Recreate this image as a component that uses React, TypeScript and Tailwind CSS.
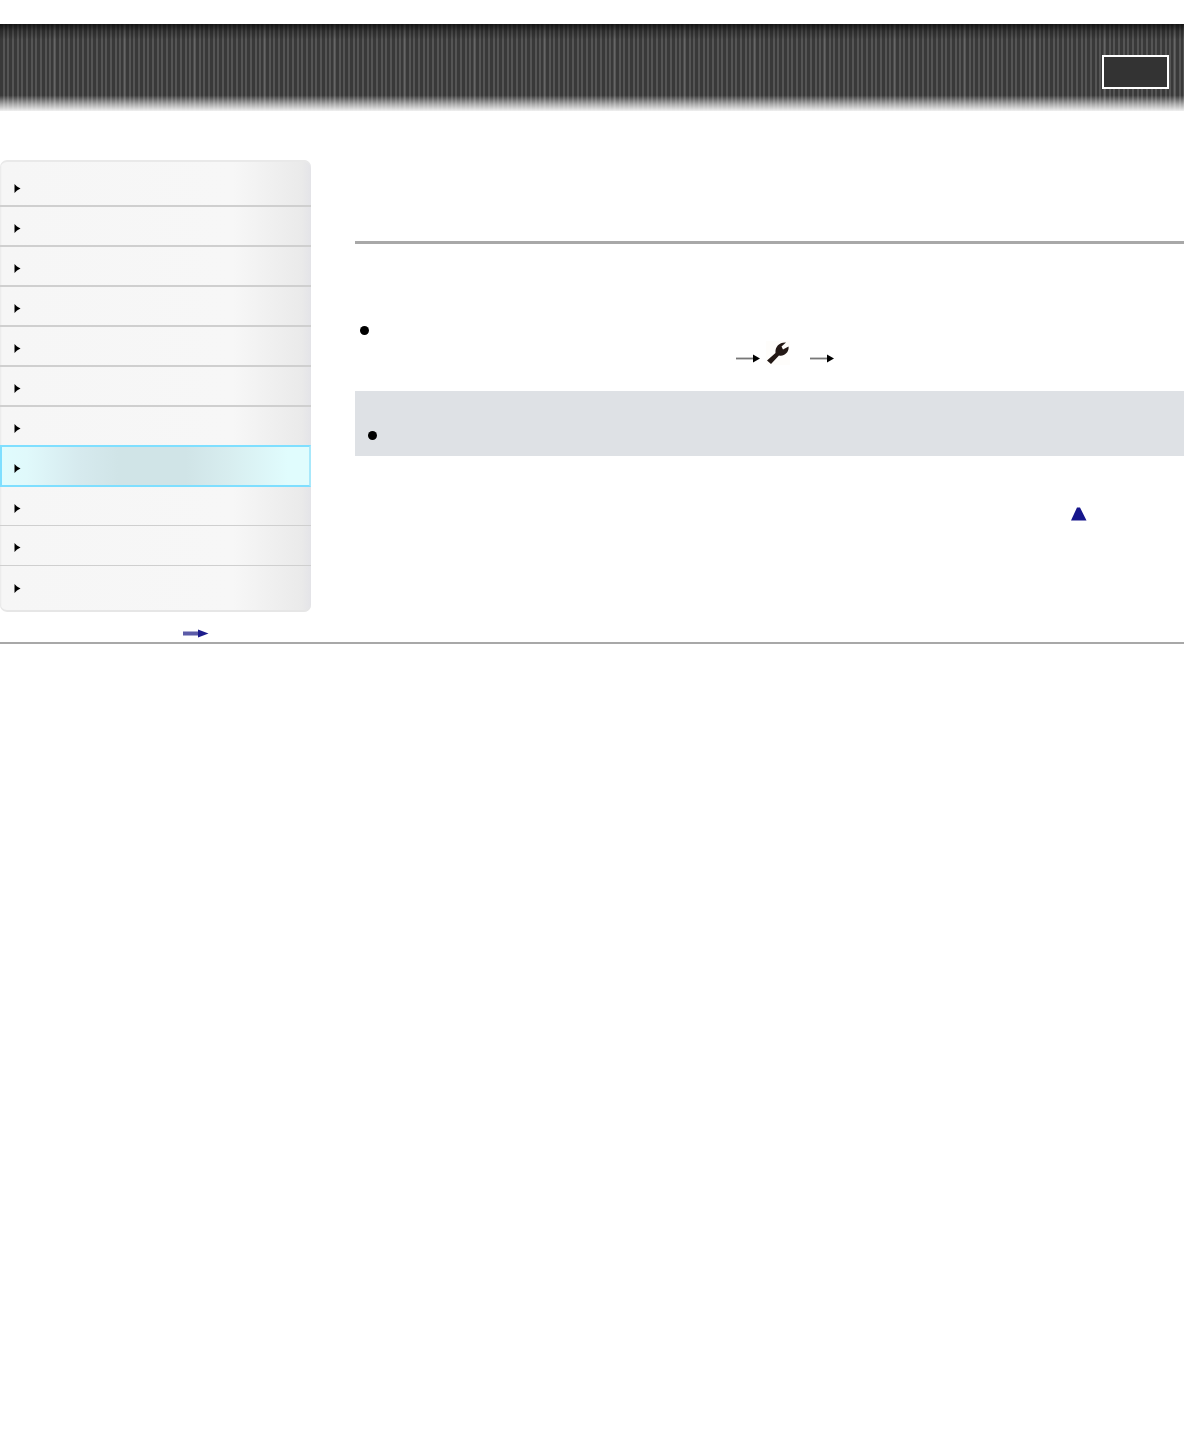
const rows = [0, 1, 2, 3, 4, 5, 6, 7, 8, 9, 10];

function Tri() {
  return (
    <svg width="7" height="9" viewBox="0 0 7 9" className="shrink-0 block blur-[0.4px]">
      <path d="M0.5 0 L0.5 9 L3 6.5 L6.5 4.5 L3 2.5 Z" fill="#000" />
    </svg>
  );
}

const rowClass: Record<number, string> = {
  0: "h-[47px] pt-[24px] border-b-2 border-[#cfcfcf]",
  1: "h-[40px] pt-[17px] border-b-2 border-[#cfcfcf]",
  2: "h-[40px] pt-[17px] border-b-2 border-[#cfcfcf]",
  3: "h-[40px] pt-[17px] border-b-2 border-[#cfcfcf]",
  4: "h-[40px] pt-[17px] border-b-2 border-[#cfcfcf]",
  5: "h-[40px] pt-[17px] border-b-2 border-[#cfcfcf]",
  6: "h-[38px] pt-[17px]",
  8: "h-[39px] pt-[17px] border-b border-[#cfcfcf]",
  9: "h-[40px] pt-[17px] border-b border-[#cfcfcf]",
  10: "h-[46px] pt-[18px]",
};

function Row({ i }: { i: number }) {
  if (i === 7) {
    return (
      <div className="h-[42px] box-border pt-[17px] pl-[12px] border-2 border-[#7fdfff] border-r-[#a8e8fb] bg-[linear-gradient(90deg,#e0fcfd_0%,#e0f9fb_8%,#d6eaee_25%,#d0e4e7_38%,#d0e4e7_60%,#d8eef0_75%,#e0fcfd_93%,#e0fcfd_100%)]">
        <Tri />
      </div>
    );
  }
  return (
    <div
      className={
        "box-border pl-[14px] bg-[linear-gradient(90deg,#e9e9e9_0px,#f6f6f6_2px,#f7f7f7_75%,#eaeaea_97%,#e4e4e8_100%)] " +
        rowClass[i]
      }
    >
      <Tri />
    </div>
  );
}

export default function App() {
  return (
    <div className="w-[1184px] h-[1440px] bg-white overflow-hidden font-['Liberation_Sans',sans-serif]">
      <div className="h-6" />
      <header className="relative h-[87px] bg-[linear-gradient(180deg,rgba(10,10,10,0.8)_0%,rgba(10,10,10,0.3)_8%,rgba(0,0,0,0)_18%,rgba(0,0,0,0)_82%,rgba(240,240,240,0.6)_92%,rgba(240,240,240,1)_100%),repeating-linear-gradient(90deg,transparent_0px,transparent_53px,rgba(255,255,255,0.1)_53px,rgba(255,255,255,0.1)_55px,transparent_55px,transparent_70px),repeating-linear-gradient(90deg,#393939_0px,#393939_3px,#555555_3px,#555555_5px,#393939_5px,#393939_7px,#555555_7px,#555555_9px,#393939_9px,#393939_12px,#555555_12px,#555555_14px)]">
        <div className="absolute left-[1102px] top-[31px] w-[67px] h-[34px] border-2 border-white bg-[#333]" />
      </header>
      <div className="flex h-[531px]">
        <div className="w-[355px] shrink-0 pt-[49px]">
          <aside className="relative w-[311px] rounded-[7px] overflow-hidden after:absolute after:inset-0 after:rounded-[7px] after:shadow-[inset_0_2px_0_#e9e9e9,inset_0_-2px_0_#e6e6e6] after:content-['']">
            {rows.map((i) => (
              <Row key={i} i={i} />
            ))}
          </aside>
          <div className="flex justify-start pl-[183px] pt-[17px]">
            <svg width="26" height="9" viewBox="0 0 26 9" className="block blur-[0.4px]">
              <rect x="0" y="2.5" width="18" height="4" fill="#5b5ba8" />
              <path d="M15 0.5 L25.5 4.5 L15 8.5 Z" fill="#1c1c8c" />
            </svg>
          </div>
        </div>
        <main className="flex-1 pt-[130px]">
          <div className="h-[3px] bg-[#a8a8a8]" />
          <div className="relative h-[147px]">
            <div className="absolute left-[5px] top-[82px] w-[9px] h-[9px] rounded-full bg-black blur-[0.3px]" />
            <div className="absolute left-[381px] top-[107px] flex items-center">
              <Arrow />
              <div className="ml-[6px] -mt-[10px] w-[24px] h-[24px] bg-[#fefdfb]">
                <svg width="24" height="24" viewBox="0 0 24 24" className="block blur-[0.4px]">
                  <path d="M1 19.5 L9.5 12 C9 6 13 1 20 1.5 L15.5 5.5 L17 8.5 L22.5 5.5 C23.5 11 18 16 13 14.5 L5 23 Z" fill="#231815" />
                </svg>
              </div>
              <div className="w-[20px]" />
              <Arrow />
            </div>
          </div>
          <div className="h-[65px] bg-[#dee1e5] flex items-end pb-[16px] pl-[13px]">
            <div className="w-[9px] h-[9px] rounded-full bg-black blur-[0.3px]" />
          </div>
          <div className="flex pl-[716px] pt-[51px]">
            <svg width="16" height="14" viewBox="0 0 16 14" className="block blur-[0.5px]">
              <path d="M6 0.5 L9 0.5 L15.5 13.5 L0 13.5 Z" fill="#16168c" />
            </svg>
          </div>
        </main>
      </div>
      <div className="h-[2px] bg-[#a8a8a8]" />
    </div>
  );
}

function Arrow() {
  return (
    <svg width="24" height="9" viewBox="0 0 24 9" className="block blur-[0.3px]">
      <rect x="0" y="3.6" width="19" height="1.8" fill="#777" />
      <path d="M17 0.5 L24 4.5 L17 8.5 Z" fill="#000" />
    </svg>
  );
}
